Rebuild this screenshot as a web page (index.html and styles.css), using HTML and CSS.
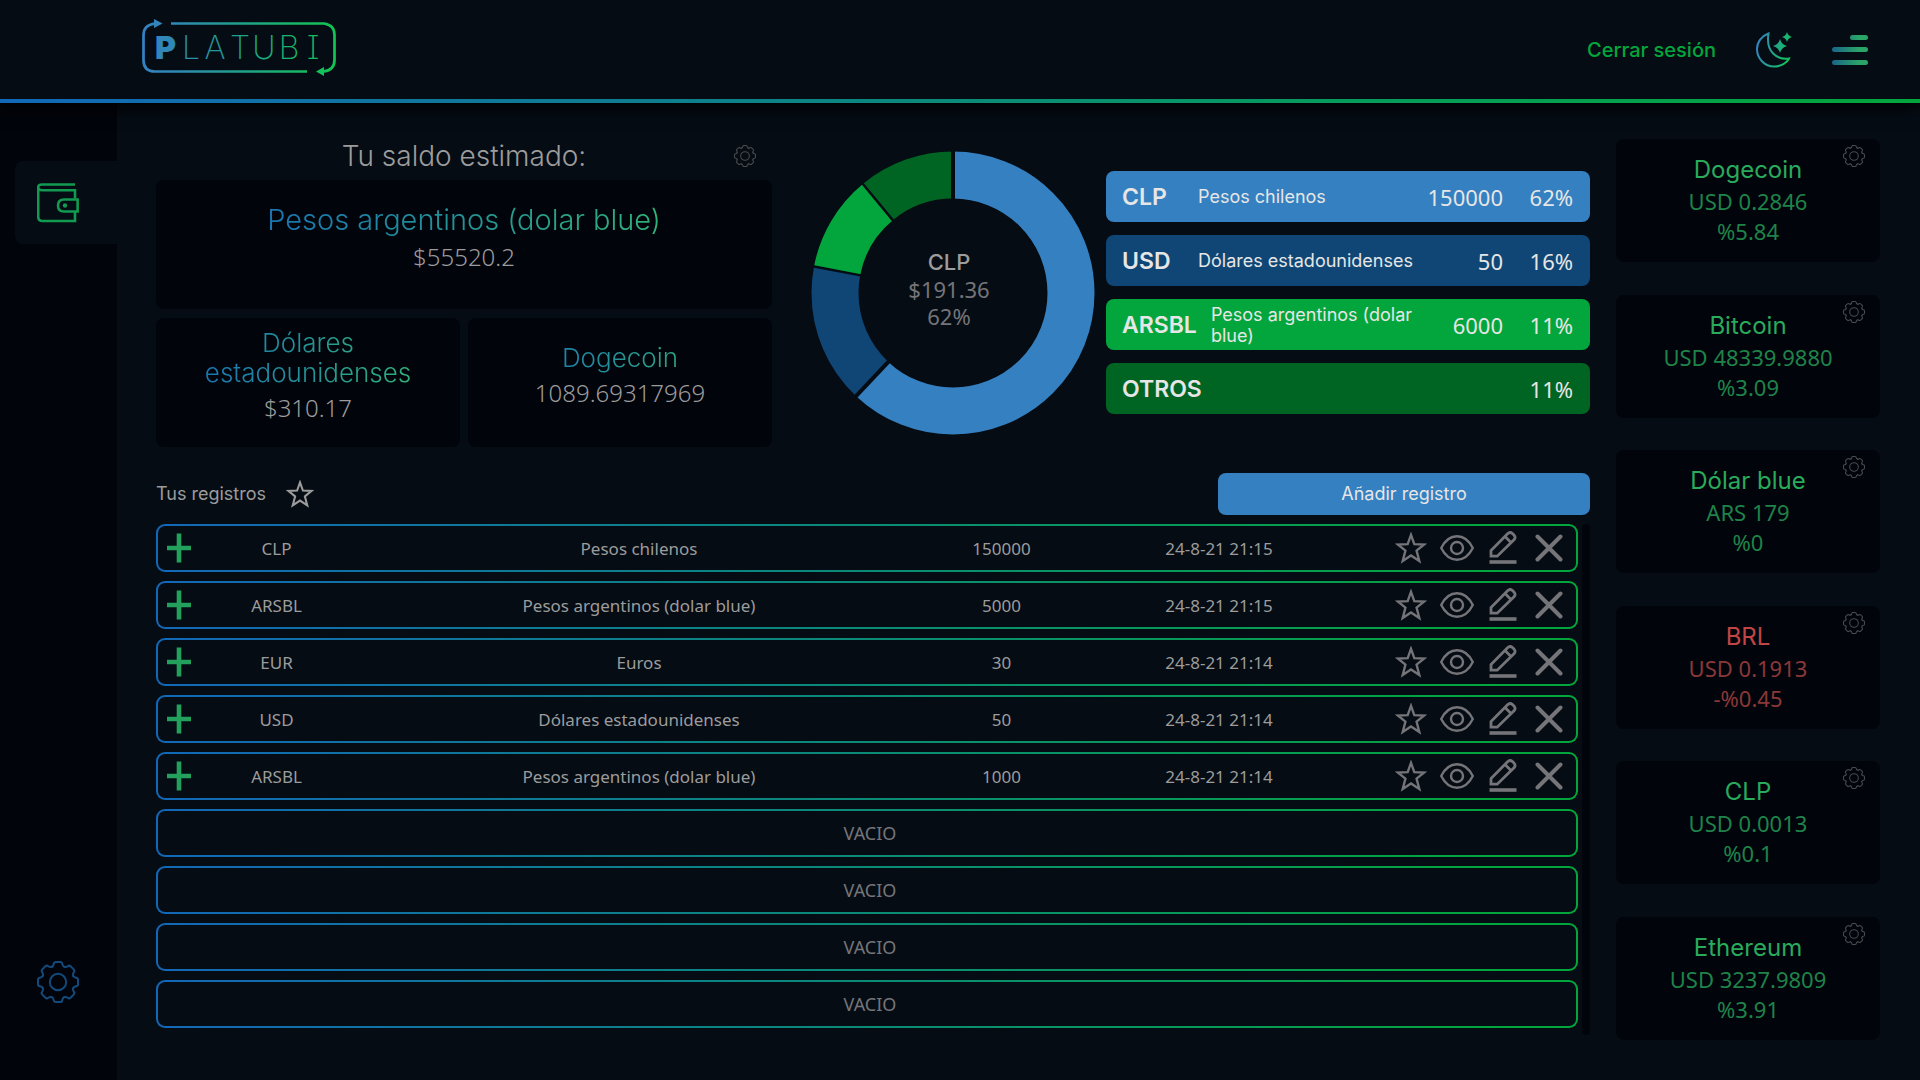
FILE: index.html
```html
<!DOCTYPE html>
<html lang="es">
<head>
<meta charset="utf-8">
<meta name="viewport" content="width=device-width, initial-scale=1">
<title>Platubi</title>
<link rel="stylesheet" href="styles.css">
</head>
<body>
<svg class="sprite" aria-hidden="true">
  <defs>
    <path id="tooth" d="M-6.3 -15.1C-4.8 -15.7 -4.5 -16.6 -4.3 -18C-4.1 -19.6 -3.3 -20 -2.2 -20L2.2 -20C3.3 -20 4.1 -19.6 4.3 -18C4.5 -16.6 4.8 -15.7 6.3 -15.1"/>
  </defs>
  <symbol id="gear" viewBox="-21 -21 42 42">
    <g fill="none" stroke="currentColor" stroke-linecap="round">
      <use href="#tooth"/><use href="#tooth" transform="rotate(45)"/><use href="#tooth" transform="rotate(90)"/><use href="#tooth" transform="rotate(135)"/>
      <use href="#tooth" transform="rotate(180)"/><use href="#tooth" transform="rotate(225)"/><use href="#tooth" transform="rotate(270)"/><use href="#tooth" transform="rotate(315)"/>
      <circle r="8.2"/>
    </g>
  </symbol>
  <symbol id="star" viewBox="0 0 30 30">
    <path d="M15 2.6L18.1 11.3L27.4 11.7L20.2 17.5L22.8 27.2L15 22L7.2 27.2L9.8 17.5L2.6 11.7L11.9 11.3Z" fill="none" stroke="currentColor" stroke-width="2.2"/>
  </symbol>
  <symbol id="eye" viewBox="0 0 34 26">
    <path d="M1.2 13C5 5.500 10.500 1.300 17 1.300S29 5.500 32.800 13C29 20.500 23.500 24.700 17 24.700S5 20.500 1.200 13Z" fill="none" stroke="currentColor" stroke-width="2.400"/>
    <circle cx="17" cy="13" r="6" fill="none" stroke="currentColor" stroke-width="2.400"/>
  </symbol>
  <symbol id="pencil" viewBox="0 0 28 34">
    <path d="M2 25.200V19.500L18.800 2.500Q21 .500 23.200 2.300L25.200 4.300Q27 6.500 25 8.700L8.200 25.200ZM16 5.500L22 11.500" fill="none" stroke="currentColor" stroke-width="2.800"/>
    <path d="M.5 31H27.500" stroke="currentColor" stroke-width="3.600"/>
  </symbol>
  <symbol id="cross" viewBox="0 0 28 28">
    <path d="M2.500 2.500L25.500 25.500M25.500 2.500L2.500 25.500" stroke="currentColor" stroke-width="4" stroke-linecap="round"/>
  </symbol>
  <symbol id="plus" viewBox="0 0 30 30">
    <path d="M15 .5V29.500M3 15H27M3 15H27" stroke="currentColor" stroke-width="4.600"/>
  </symbol>
</svg>

<header class="topbar">
  <a class="logo" href="#" aria-label="Platubi">
    <svg viewBox="0 0 196 60" width="196" height="60">
      <defs>
        <linearGradient id="brand" gradientUnits="userSpaceOnUse" x1="0" y1="0" x2="196" y2="0">
          <stop offset="0" stop-color="#3580c1"/><stop offset=".15" stop-color="#3088b6"/><stop offset=".5" stop-color="#20a08c"/><stop offset=".85" stop-color="#18bb60"/><stop offset="1" stop-color="#0fc653"/>
        </linearGradient>
      </defs>
      <g fill="none" stroke="url(#brand)" stroke-width="2.700">
        <path d="M15 5.500H14Q2.500 7 2.500 17V42Q2.500 53.500 14 53.500H166"/>
        <path d="M30 5.500H183Q193.500 7 193.500 17V42Q193.500 52.500 182 53.500"/>
      </g>
      <path d="M13 1L21.500 5.500L13 10ZM183 49L175 53.500L183 58Z" fill="url(#brand)"/>
      <text class="logo-initial" x="14" y="41" fill="url(#brand)">P</text>
      <text class="logo-text" x="50 74 99 123 148 172" y="41" fill="url(#brand)">LATUBI</text>
    </svg>
  </a>
  <nav class="topnav" aria-label="Cuenta">
    <a class="logout" href="#">Cerrar sesión</a>
    <button class="icon-button" type="button" aria-label="Modo oscuro">
      <svg viewBox="0 0 36 36" width="36" height="36">
        <defs><linearGradient id="moon" gradientUnits="userSpaceOnUse" x1="0" y1="10" x2="36" y2="20"><stop offset="0" stop-color="#3580c1"/><stop offset="1" stop-color="#10c556"/></linearGradient></defs>
        <path d="M12.500 1.500C5.500 4 1 10 1 17C1 27 9 34.500 18 34.500C25 34.500 31 31 33 26.500C21 28 9.500 20 12.500 1.500Z" fill="none" stroke="url(#moon)" stroke-width="2"/>
        <path d="M24 7Q25.500 12.500 31 14Q25.500 15.500 24 21Q22.500 15.500 17 14Q22.500 12.500 24 7ZM31 0Q32 4 36 5Q32 6 31 10Q30 6 26 5Q30 4 31 0Z" fill="url(#moon)"/>
      </svg>
    </button>
    <button class="icon-button" type="button" aria-label="Menú">
      <svg viewBox="0 0 36 30" width="36" height="30">
        <defs><linearGradient id="bars" gradientUnits="userSpaceOnUse" x1="0" y1="0" x2="36" y2="0"><stop offset="0" stop-color="#1a6488"/><stop offset=".75" stop-color="#2aa567"/></linearGradient></defs>
        <g fill="url(#bars)"><rect x="18" y="0" width="18" height="5" rx="2.500"/><rect y="12" width="36" height="5" rx="2.500"/><rect y="25" width="36" height="5" rx="2.500"/></g>
      </svg>
    </button>
  </nav>
</header>

<div class="shell">
  <nav class="sidebar" aria-label="Principal">
    <a class="side-tab" href="#" aria-label="Cartera">
      <svg viewBox="0 0 42 40" width="42" height="40">
        <g fill="none" stroke="#129a50" stroke-width="2.600">
          <path d="M38 1.500H5Q1.200 1.500 1.200 4.300T5 7.200H38V15.500M1.200 4V33.500Q1.200 38 5.500 38H38V29"/>
          <path d="M40.600 16.500H27Q21 16.500 21 22.500T27 28.500H40.600Z"/>
        </g>
        <circle cx="28" cy="22.500" r="2.200" fill="#129a50"/>
      </svg>
    </a>
    <a class="side-settings" href="#" aria-label="Configuración"><svg width="42" height="42"><use href="#gear"/></svg></a>
  </nav>

  <main class="content">
    <div class="overview">
      <section class="balance">
        <div class="balance-title">
          <h2>Tu saldo estimado:</h2>
          <button class="config" type="button" aria-label="Configurar saldo"><svg width="22" height="22"><use href="#gear"/></svg></button>
        </div>
        <div class="balance-grid">
          <article class="panel panel-main"><h3>Pesos argentinos (dolar blue)</h3><p>$55520.2</p></article>
          <article class="panel"><h3>Dólares<br>estadounidenses</h3><p>$310.17</p></article>
          <article class="panel"><h3>Dogecoin</h3><p>1089.69317969</p></article>
        </div>
      </section>

      <figure class="donut">
        <svg viewBox="-142 -142 284 284" aria-hidden="true">
          <g fill="none" stroke-width="47" transform="rotate(-90)">
            <circle r="118" pathLength="100" stroke="#3580c1" stroke-dasharray="62 38"/>
            <circle r="118" pathLength="100" stroke="#0f4675" stroke-dasharray="16 84" stroke-dashoffset="-62"/>
            <circle r="118" pathLength="100" stroke="#03a63c" stroke-dasharray="11 89" stroke-dashoffset="-78"/>
            <circle r="118" pathLength="100" stroke="#006422" stroke-dasharray="11 89" stroke-dashoffset="-89"/>
          </g>
          <g stroke="#050c14">
            <path d="M0 -90V-144" stroke-width="4"/>
            <path d="M0 -90V-144" stroke-width="4" transform="rotate(223.200)"/>
            <path d="M0 -90V-144" stroke-width="2.500" transform="rotate(280.800)"/>
            <path d="M0 -90V-144" stroke-width="2.500" transform="rotate(320.400)"/>
          </g>
        </svg>
        <figcaption><strong>CLP</strong><span>$191.36</span><span>62%</span></figcaption>
      </figure>

      <ul class="legend">
        <li class="legend-item blue"><b>CLP</b><span class="name">Pesos chilenos</span><span>150000</span><span class="share">62%</span></li>
        <li class="legend-item navy"><b>USD</b><span class="name">Dólares estadounidenses</span><span>50</span><span class="share">16%</span></li>
        <li class="legend-item green"><b>ARSBL</b><span class="name">Pesos argentinos (dolar blue)</span><span>6000</span><span class="share">11%</span></li>
        <li class="legend-item forest"><b>OTROS</b><span class="name"></span><span class="share">11%</span></li>
      </ul>
    </div>

    <section class="records">
      <div class="records-head">
        <h2>Tus registros</h2>
        <button class="icon-button favorite" type="button" aria-label="Favoritos"><svg width="28" height="28"><use href="#star"/></svg></button>
        <button class="add" type="button">Añadir registro</button>
      </div>
      <div class="records-scroll">
        <table class="records-table">
          <tbody>
            <tr>
              <td><button class="icon-button expand" type="button" aria-label="Ampliar"><svg width="30" height="30"><use href="#plus"/></svg></button></td>
              <td>CLP</td><td>Pesos chilenos</td><td>150000</td><td>24-8-21 21:15</td>
              <td class="actions"><button type="button" aria-label="Favorito"><svg width="32" height="32"><use href="#star"/></svg></button><button type="button" aria-label="Ver"><svg width="34" height="26"><use href="#eye"/></svg></button><button type="button" aria-label="Editar"><svg width="28" height="34"><use href="#pencil"/></svg></button><button type="button" aria-label="Eliminar"><svg width="28" height="28"><use href="#cross"/></svg></button></td>
            </tr>
            <tr>
              <td><button class="icon-button expand" type="button" aria-label="Ampliar"><svg width="30" height="30"><use href="#plus"/></svg></button></td>
              <td>ARSBL</td><td>Pesos argentinos (dolar blue)</td><td>5000</td><td>24-8-21 21:15</td>
              <td class="actions"><button type="button" aria-label="Favorito"><svg width="32" height="32"><use href="#star"/></svg></button><button type="button" aria-label="Ver"><svg width="34" height="26"><use href="#eye"/></svg></button><button type="button" aria-label="Editar"><svg width="28" height="34"><use href="#pencil"/></svg></button><button type="button" aria-label="Eliminar"><svg width="28" height="28"><use href="#cross"/></svg></button></td>
            </tr>
            <tr>
              <td><button class="icon-button expand" type="button" aria-label="Ampliar"><svg width="30" height="30"><use href="#plus"/></svg></button></td>
              <td>EUR</td><td>Euros</td><td>30</td><td>24-8-21 21:14</td>
              <td class="actions"><button type="button" aria-label="Favorito"><svg width="32" height="32"><use href="#star"/></svg></button><button type="button" aria-label="Ver"><svg width="34" height="26"><use href="#eye"/></svg></button><button type="button" aria-label="Editar"><svg width="28" height="34"><use href="#pencil"/></svg></button><button type="button" aria-label="Eliminar"><svg width="28" height="28"><use href="#cross"/></svg></button></td>
            </tr>
            <tr>
              <td><button class="icon-button expand" type="button" aria-label="Ampliar"><svg width="30" height="30"><use href="#plus"/></svg></button></td>
              <td>USD</td><td>Dólares estadounidenses</td><td>50</td><td>24-8-21 21:14</td>
              <td class="actions"><button type="button" aria-label="Favorito"><svg width="32" height="32"><use href="#star"/></svg></button><button type="button" aria-label="Ver"><svg width="34" height="26"><use href="#eye"/></svg></button><button type="button" aria-label="Editar"><svg width="28" height="34"><use href="#pencil"/></svg></button><button type="button" aria-label="Eliminar"><svg width="28" height="28"><use href="#cross"/></svg></button></td>
            </tr>
            <tr>
              <td><button class="icon-button expand" type="button" aria-label="Ampliar"><svg width="30" height="30"><use href="#plus"/></svg></button></td>
              <td>ARSBL</td><td>Pesos argentinos (dolar blue)</td><td>1000</td><td>24-8-21 21:14</td>
              <td class="actions"><button type="button" aria-label="Favorito"><svg width="32" height="32"><use href="#star"/></svg></button><button type="button" aria-label="Ver"><svg width="34" height="26"><use href="#eye"/></svg></button><button type="button" aria-label="Editar"><svg width="28" height="34"><use href="#pencil"/></svg></button><button type="button" aria-label="Eliminar"><svg width="28" height="28"><use href="#cross"/></svg></button></td>
            </tr>
            <tr class="empty"><td colspan="6">VACIO</td></tr>
            <tr class="empty"><td colspan="6">VACIO</td></tr>
            <tr class="empty"><td colspan="6">VACIO</td></tr>
            <tr class="empty"><td colspan="6">VACIO</td></tr>
          </tbody>
        </table>
        <div class="track"></div>
      </div>
    </section>
  </main>

  <aside class="rates" aria-label="Cotizaciones">
    <article class="rate"><h3>Dogecoin</h3><p>USD 0.2846</p><p>%5.84</p><button class="config" type="button" aria-label="Configurar"><svg width="22" height="22"><use href="#gear"/></svg></button></article>
    <article class="rate"><h3>Bitcoin</h3><p>USD 48339.9880</p><p>%3.09</p><button class="config" type="button" aria-label="Configurar"><svg width="22" height="22"><use href="#gear"/></svg></button></article>
    <article class="rate"><h3>Dólar blue</h3><p>ARS 179</p><p>%0</p><button class="config" type="button" aria-label="Configurar"><svg width="22" height="22"><use href="#gear"/></svg></button></article>
    <article class="rate down"><h3>BRL</h3><p>USD 0.1913</p><p>-%0.45</p><button class="config" type="button" aria-label="Configurar"><svg width="22" height="22"><use href="#gear"/></svg></button></article>
    <article class="rate"><h3>CLP</h3><p>USD 0.0013</p><p>%0.1</p><button class="config" type="button" aria-label="Configurar"><svg width="22" height="22"><use href="#gear"/></svg></button></article>
    <article class="rate"><h3>Ethereum</h3><p>USD 3237.9809</p><p>%3.91</p><button class="config" type="button" aria-label="Configurar"><svg width="22" height="22"><use href="#gear"/></svg></button></article>
  </aside>
</div>
</body>
</html>
```
FILE: styles.css
```css
:root {
  --bg: #050c14;
  --panel: #02040b;
  --text: #9c9c9c;
  --muted: #757579;
  --light: #e6e6e6;
  --display: Inter, "Open Sans", sans-serif;
  --body: "Noto Sans", "Open Sans", sans-serif;
}

* { box-sizing: border-box; }

body {
  margin: 0;
  min-height: 100vh;
  display: flex;
  flex-direction: column;
  background: var(--bg);
  color: var(--text);
  font-family: var(--body);
}

h2, h3, p, ul, figure { margin: 0; padding: 0; font-weight: 400; }
button { margin: 0; padding: 0; border: 0; background: none; color: inherit; font: inherit; cursor: pointer; }
a { color: inherit; text-decoration: none; }
svg { display: block; }
.sprite { position: absolute; width: 0; height: 0; }

/* Header */
.topbar {
  position: relative;
  z-index: 1;
  display: flex;
  align-items: center;
  justify-content: space-between;
  height: 103px;
  padding: 0 52px 0 141px;
  border-bottom: 4px solid;
  border-image: linear-gradient(90deg, #1268b8, #0e7f8e 35%, #079b5c 70%, #03a63c) 1;
  background: var(--bg);
  box-shadow: 0 4px 16px #000;
}
.logo { margin-bottom: 4px; }
.logo-initial, .logo-text { font-family: var(--display); }
.logo-initial { font-size: 32px; font-weight: 900; }
.logo-text { font-size: 32px; font-weight: 200; text-anchor: middle; font-feature-settings: "cv08"; }
.topnav { display: flex; align-items: center; gap: 40px; }
.logout { color: #03a63c; font-family: var(--display); font-size: 20px; font-weight: 500; }
.icon-button { display: grid; place-items: center; }

/* Page frame */
.shell {
  flex: 1;
  display: grid;
  grid-template-columns: 117px minmax(0, 1fr) 264px;
  padding-right: 40px;
}
.sidebar {
  display: flex;
  flex-direction: column;
  align-items: flex-end;
  justify-content: space-between;
  padding: 58px 0 77px;
  background: var(--panel);
}
.side-tab {
  display: flex;
  align-items: center;
  width: 102px;
  height: 83px;
  padding-left: 22px;
  border-radius: 8px 0 0 8px;
  background: var(--bg);
}
.side-settings { width: 80px; color: #124a7b; stroke-width: 2; }
.content { padding: 28px 26px 44px 39px; }

/* Balance */
.overview {
  display: grid;
  grid-template-columns: minmax(0, 616fr) 334px minmax(0, 484fr);
}
.balance-title {
  display: grid;
  grid-template-columns: 38px 1fr 38px;
  align-items: center;
  height: 49px;
}
.balance-title h2 { grid-column: 2; font: 300 28px/32px var(--display); text-align: center; }
.config { color: #4a4b4e; stroke-width: 2; }
.balance-grid { display: grid; grid-template-columns: 1fr 1fr; gap: 9px 8px; }
.panel {
  display: flex;
  flex-direction: column;
  align-items: center;
  justify-content: center;
  gap: 4px;
  min-height: 129px;
  padding-bottom: 14px;
  border-radius: 8px;
  background: var(--panel);
  text-align: center;
}
.panel-main { grid-column: 1 / -1; }
.panel h3 {
  min-width: 210px;
  background: linear-gradient(90deg, #1976b3, #2fb278);
  background-clip: text;
  color: transparent;
  font: 300 26px/30px var(--display);
}
.panel.panel-main h3 { font-size: 29px; line-height: 34px; }
.panel p { font-size: 24px; line-height: 32px; font-weight: 300; }

/* Distribution chart */
.donut {
  display: grid;
  place-items: center;
  align-self: start;
  width: 284px;
  margin: 20px 0 0 39px;
}
.donut svg, .donut figcaption { grid-area: 1 / 1; }
.donut svg { width: 100%; }
.donut figcaption {
  display: grid;
  padding: 0 8px 8px 0;
  color: var(--muted);
  font-size: 22px;
  line-height: 27px;
  text-align: center;
}
.donut strong { color: var(--text); font-family: var(--display); font-weight: 500; }

.legend {
  display: flex;
  flex-direction: column;
  gap: 13px;
  padding-top: 40px;
  list-style: none;
}
.legend-item {
  display: flex;
  align-items: center;
  gap: 14px;
  height: 51px;
  padding: 0 17px 0 16px;
  border-radius: 8px;
  color: var(--light);
  font-size: 22px;
}
.legend-item b { min-width: 62px; font: 600 23px/26px var(--display); }
.legend-item .name { flex: 1; font: 400 18px/21px var(--display); }
.legend-item .share { width: 56px; text-align: right; }
.blue { background: #3580c1; }
.navy { background: #0f4675; }
.green { background: #03a63c; }
.forest { background: #006422; }

/* Records */
.records { margin-top: 26px; }
.records-head { display: flex; align-items: center; height: 42px; }
.records-head h2 { font: 400 18px/24px var(--display); }
.favorite { margin-left: 20px; }
.add {
  width: 372px;
  height: 42px;
  margin-left: auto;
  border-radius: 8px;
  background: #3580c1;
  color: var(--light);
  font: 400 18px/24px var(--display);
}
.records-scroll {
  display: flex;
  justify-content: space-between;
  gap: 4px;
  margin-top: 9px;
}
.records-table { display: block; flex: 1; }
.records-table tbody { display: flex; flex-direction: column; gap: 9px; }
.records-table tr {
  display: grid;
  grid-template-columns: 46px minmax(0, 145fr) minmax(0, 580fr) minmax(0, 145fr) minmax(0, 290fr) 212px;
  align-items: center;
  height: 48px;
  border: 2px solid transparent;
  border-radius: 9px;
  background: linear-gradient(var(--bg), var(--bg)) padding-box, linear-gradient(90deg, #1268b8, #0a8f70 55%, #03a63c 95%) border-box;
}
.records-table td { padding: 0; font-size: 17px; text-align: center; }
.records-table .empty { grid-template-columns: 1fr; padding-left: 6px; color: var(--muted); }
.records-table .empty td { font-size: 18px; }
.expand { width: 42px; color: #23a15c; }
.actions { display: flex; justify-content: flex-end; color: #757579; }
.records-table .actions { padding-right: 4px; }
.actions button { display: grid; place-items: center; width: 46px; height: 44px; }
.track { width: 8px; margin-bottom: -7px; border-radius: 4px; background: var(--panel); }

/* Exchange rates */
.rates {
  display: flex;
  flex-direction: column;
  justify-content: space-between;
  padding: 36px 0 40px;
}
.rate {
  position: relative;
  height: 123px;
  padding-top: 14px;
  border-radius: 8px;
  background: var(--panel);
  color: #1f8349;
  text-align: center;
}
.rate h3 { color: #2aaa5b; font: 400 24px/33px var(--display); }
.rate p { font-size: 22px; line-height: 30px; }
.rate .config { position: absolute; top: 6px; right: 15px; }
.rate.down { color: #8a3838; }
.rate.down h3 { color: #c14545; }
```
